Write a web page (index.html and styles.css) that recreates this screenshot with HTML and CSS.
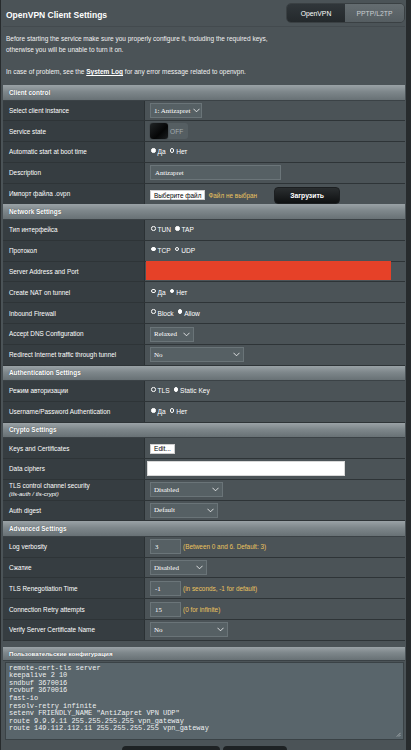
FILE: index.html
```html
<!DOCTYPE html>
<html>
<head>
<meta charset="utf-8">
<link rel="stylesheet" href="styles.css">
</head>
<body>
<div class="page">
  <div class="topbar">
    <h1 class="title">OpenVPN Client Settings</h1>
    <div class="tabs">
      <span class="tab tab-active">OpenVPN</span>
      <span class="tab">PPTP/L2TP</span>
    </div>
  </div>
  <div class="divider"></div>
  <div class="intro">
    <p>Before starting the service make sure you properly configure it, including the required keys,<br>otherwise you will be unable to turn it on.</p>
    <p>In case of problem, see the <a class="link">System Log</a> for any error message related to openvpn.</p>
  </div>

  <section class="group">
    <div class="ghead">Client control</div>
    <div class="row"><div class="label">Select client instance</div><div class="value"><span class="select w-inst">1: Antizapret<svg class="chev" viewBox="0 0 8 5"><polyline points="0.5,0.5 4,4 7.5,0.5"/></svg></span></div></div>
    <div class="row"><div class="label">Service state</div><div class="value"><span class="toggle"><span class="knob"></span><span class="off">OFF</span></span></div></div>
    <div class="row"><div class="label">Automatic start at boot time</div><div class="value"><span class="radio on"></span><span class="rtxt">Да</span><span class="radio"></span><span class="rtxt">Нет</span></div></div>
    <div class="row"><div class="label">Description</div><div class="value"><span class="input w-desc">Antizapret</span></div></div>
    <div class="row"><div class="label">Импорт файла .ovpn</div><div class="value"><span class="filebtn">Выберите файл</span><span class="hint nofile">Файл не выбран</span><span class="upload">Загрузить</span></div></div>
  </section>

  <section class="group">
    <div class="ghead">Network Settings</div>
    <div class="row"><div class="label">Тип интерфейса</div><div class="value"><span class="radio"></span><span class="rtxt">TUN</span><span class="radio on"></span><span class="rtxt">TAP</span></div></div>
    <div class="row"><div class="label">Протокол</div><div class="value"><span class="radio on"></span><span class="rtxt">TCP</span><span class="radio"></span><span class="rtxt">UDP</span></div></div>
    <div class="row"><div class="label">Server Address and Port</div><div class="value value-flush"><span class="redact"></span></div></div>
    <div class="row"><div class="label">Create NAT on tunnel</div><div class="value"><span class="radio"></span><span class="rtxt">Да</span><span class="radio on"></span><span class="rtxt">Нет</span></div></div>
    <div class="row"><div class="label">Inbound Firewall</div><div class="value"><span class="radio"></span><span class="rtxt">Block</span><span class="radio on"></span><span class="rtxt">Allow</span></div></div>
    <div class="row"><div class="label">Accept DNS Configuration</div><div class="value"><span class="select w-relaxed">Relaxed<svg class="chev" viewBox="0 0 8 5"><polyline points="0.5,0.5 4,4 7.5,0.5"/></svg></span></div></div>
    <div class="row"><div class="label">Redirect Internet traffic through tunnel</div><div class="value"><span class="select w-redirect">No<svg class="chev" viewBox="0 0 8 5"><polyline points="0.5,0.5 4,4 7.5,0.5"/></svg></span></div></div>
  </section>

  <section class="group">
    <div class="ghead">Authentication Settings</div>
    <div class="row"><div class="label">Режим авторизации</div><div class="value"><span class="radio"></span><span class="rtxt">TLS</span><span class="radio on"></span><span class="rtxt">Static Key</span></div></div>
    <div class="row"><div class="label">Username/Password Authentication</div><div class="value"><span class="radio on"></span><span class="rtxt">Да</span><span class="radio"></span><span class="rtxt">Нет</span></div></div>
  </section>

  <section class="group">
    <div class="ghead">Crypto Settings</div>
    <div class="row"><div class="label">Keys and Certificates</div><div class="value"><span class="editbtn">Edit...</span></div></div>
    <div class="row"><div class="label">Data ciphers</div><div class="value value-tight"><span class="whiteinput"></span></div></div>
    <div class="row"><div class="label label-two">TLS control channel security<span class="sub">(tls-auth / tls-crypt)</span></div><div class="value"><span class="select w-disabled">Disabled<svg class="chev" viewBox="0 0 8 5"><polyline points="0.5,0.5 4,4 7.5,0.5"/></svg></span></div></div>
    <div class="row"><div class="label">Auth digest</div><div class="value"><span class="select w-default">Default<svg class="chev" viewBox="0 0 8 5"><polyline points="0.5,0.5 4,4 7.5,0.5"/></svg></span></div></div>
  </section>

  <section class="group">
    <div class="ghead">Advanced Settings</div>
    <div class="row"><div class="label">Log verbosity</div><div class="value"><span class="input w-num">3</span><span class="hint">(Between 0 and 6. Default: 3)</span></div></div>
    <div class="row"><div class="label">Сжатие</div><div class="value"><span class="select w-comp">Disabled<svg class="chev" viewBox="0 0 8 5"><polyline points="0.5,0.5 4,4 7.5,0.5"/></svg></span></div></div>
    <div class="row"><div class="label">TLS Renegotiation Time</div><div class="value"><span class="input w-num">-1</span><span class="hint">(in seconds, -1 for default)</span></div></div>
    <div class="row"><div class="label">Connection Retry attempts</div><div class="value"><span class="input w-num">15</span><span class="hint">(0 for infinite)</span></div></div>
    <div class="row"><div class="label">Verify Server Certificate Name</div><div class="value"><span class="select w-verify">No<svg class="chev" viewBox="0 0 8 5"><polyline points="0.5,0.5 4,4 7.5,0.5"/></svg></span></div></div>
  </section>

  <section class="group group-custom">
    <div class="ghead">Пользовательские конфигурация</div>
    <div class="custom">
      <div class="textarea">remote-cert-tls server
keepalive 2 10
sndbuf 3670016
rcvbuf 3670016
fast-io
resolv-retry infinite
setenv FRIENDLY_NAME "AntiZapret VPN UDP"
route 9.9.9.11 255.255.255.255 vpn_gateway
route 149.112.112.11 255.255.255.255 vpn_gateway<svg class="grip" viewBox="0 0 6 6"><line x1="1" y1="5.5" x2="5.5" y2="1"/><line x1="3.5" y1="5.5" x2="5.5" y2="3.5"/></svg></div>
    </div>
  </section>

  <div class="actions">
    <span class="abtn abtn-wide"></span>
    <span class="abtn"></span>
  </div>
</div>
</body>
</html>
```
FILE: styles.css
```css
* { box-sizing: border-box; }
html, body { margin: 0; padding: 0; }
body {
  background: #272b2d;
  font-family: "Liberation Sans", Arial, sans-serif;
  color: #ffffff;
  width: 411px;
  height: 750px;
  overflow: hidden;
}
.page {
  width: 405px;
  margin-left: 1px;
  background: #4b5357;
  min-height: 750px;
  padding: 0 1px 0 2px;
}
.topbar {
  display: flex;
  align-items: center;
  justify-content: space-between;
  height: 26px;
  padding-left: 3px;
}
.title {
  margin: 0;
  font-size: 8.5px;
  font-weight: bold;
  color: #ffffff;
  padding-top: 3px;
}
.tabs {
  display: flex;
  height: 20px;
  border: 1px solid #3a4043;
  border-radius: 5px;
  overflow: hidden;
}
.tab {
  display: flex;
  align-items: center;
  justify-content: center;
  width: 59px;
  font-size: 6.8px;
  color: #c9ced0;
  background: linear-gradient(#646c70, #555d61);
}
.tab-active {
  width: 58px;
  color: #ffffff;
  background: linear-gradient(#30363a, #24292c);
}
.divider {
  height: 1px;
  background: #5e666a;
  border-top: 1px solid #434a4e;
}
.intro {
  padding: 6px 0 0 3px;
  height: 58px;
  font-size: 6.5px;
  color: #f2f2f2;
}
.intro p {
  margin: 0 0 11px 0;
  line-height: 11px;
}
.link {
  font-weight: bold;
  text-decoration: underline;
  color: #ffffff;
}
.group {
  display: flex;
  flex-direction: column;
}
.ghead {
  height: 15.5px;
  display: flex;
  align-items: center;
  padding-left: 6px;
  font-size: 6.4px;
  font-weight: bold;
  color: #ffffff;
  background: linear-gradient(#9aa2a6, #7e878b 45%, #687175);
  border-bottom: 1px solid #3b4246;
  text-shadow: 0 0 1px #3c4346;
}
.row {
  display: grid;
  grid-template-columns: 142px 1fr;
  height: 20.8px;
  border-bottom: 1px solid #2e3437;
}
.label {
  display: flex;
  align-items: center;
  padding-left: 6px;
  background: #363d41;
  border-right: 1px solid #2b3134;
  font-size: 6.4px;
  color: #ffffff;
  white-space: nowrap;
}
.label-two {
  flex-direction: column;
  align-items: flex-start;
  justify-content: center;
  line-height: 8px;
}
.sub {
  font-style: italic;
  font-size: 6px;
}
.value {
  display: flex;
  align-items: center;
  padding-left: 5px;
  background: #4b5357;
  font-size: 6.4px;
  color: #ffffff;
  white-space: nowrap;
}
.value-flush { padding-left: 1px; }
.value-tight { padding-left: 2px; }
.radio {
  width: 4.5px;
  height: 4.5px;
  border-radius: 50%;
  border: 1px solid #ffffff;
  margin: -3px 2px 0 1px;
}
.radio.on { background: #ffffff; }
.rtxt { margin-right: 3px; font-size: 6.6px; }
.select {
  display: flex;
  align-items: center;
  justify-content: space-between;
  height: 15px;
  padding: 0 3px 0 3px;
  background: #566064;
  border: 1px solid #6a7478;
  font-family: "Liberation Serif", "Times New Roman", serif;
  font-size: 7px;
  color: #ffffff;
  white-space: nowrap;
}
.chev {
  flex: none;
  width: 7px;
  height: 5px;
  margin-left: 3px;
  fill: none;
  stroke: #ffffff;
  stroke-width: 0.9;
}
.w-inst { width: 52px; margin-top: 1px; padding-right: 2px; }
.w-relaxed { width: 44px; margin-top: 1px; }
.w-redirect { width: 94px; }
.w-disabled { width: 73px; }
.w-default { width: 68px; }
.w-comp { width: 57px; }
.w-verify { width: 78px; }
.toggle {
  display: flex;
  align-items: center;
  height: 16px;
  width: 38px;
  background: #555e62;
  border-radius: 3px;
}
.knob {
  width: 18px;
  height: 16px;
  border-radius: 3px;
  background: linear-gradient(135deg, #202426, #050606 60%, #1a1d1f);
  box-shadow: 0 0 1px #111;
}
.off {
  font-size: 6.6px;
  color: #a3aaad;
  margin-left: 2px;
}
.input {
  display: flex;
  align-items: center;
  height: 15px;
  padding-left: 4px;
  background: #566064;
  border: 1px solid #6b7579;
  font-family: "Liberation Serif", "Times New Roman", serif;
  font-size: 6.8px;
  color: #ffffff;
}
.w-desc { width: 131px; }
.w-num { width: 31px; margin-right: 2px; }
.hint {
  color: #ebc35f;
  font-size: 6.4px;
}
.filebtn {
  display: flex;
  align-items: center;
  height: 10px;
  padding: 0 3px;
  background: #ffffff;
  color: #000000;
  font-size: 6.4px;
  border: 1px solid #cfcfcf;
  margin-top: 3px;
}
.nofile { margin-left: 3px; margin-top: 3px; }
.upload {
  display: flex;
  align-items: center;
  justify-content: center;
  width: 66px;
  height: 17px;
  margin-left: 17px;
  margin-top: 3px;
  border-radius: 4px;
  background: linear-gradient(#2a2e30, #0f1112);
  border: 1px solid #1c1f21;
  font-size: 6.8px;
  font-weight: bold;
  color: #ffffff;
}
.redact {
  width: 245px;
  height: 19px;
  background: #e64128;
  margin-top: -2px;
}
.editbtn {
  display: flex;
  align-items: center;
  height: 10px;
  padding: 0 3px;
  background: #ffffff;
  color: #000000;
  font-size: 6.6px;
  border: 1px solid #cfcfcf;
  margin-top: 1px;
}
.whiteinput {
  width: 198px;
  height: 15px;
  background: #ffffff;
  border: 1px solid #d8d8d8;
}
.group-custom {
  margin-top: 6px;
}
.group-custom .ghead {
  height: 14px;
  font-size: 6.2px;
  border-bottom: 1px solid #3a4145;
}
.custom {
  padding: 1px 1px 0 1px;
  background: #4b5357;
}
.textarea {
  position: relative;
  height: 78px;
  margin-left: 1px;
  padding: 2px 0 0 3px;
  background: #59656b;
  border: 1px solid #3a4246;
  font-family: "Liberation Mono", "Courier New", monospace;
  font-size: 6.95px;
  line-height: 7.55px;
  color: #eef0f1;
  white-space: pre;
}
.grip {
  position: absolute;
  right: 2px;
  bottom: 2px;
  width: 5px;
  height: 5px;
  stroke: #c6cbcd;
  stroke-width: 0.8;
}
.actions {
  display: flex;
  gap: 3px;
  padding: 6px 0 0 119px;
}
.abtn {
  width: 64px;
  height: 16px;
  border-radius: 4px;
  background: #1e2224;
}
.abtn-wide { width: 98px; }
```
